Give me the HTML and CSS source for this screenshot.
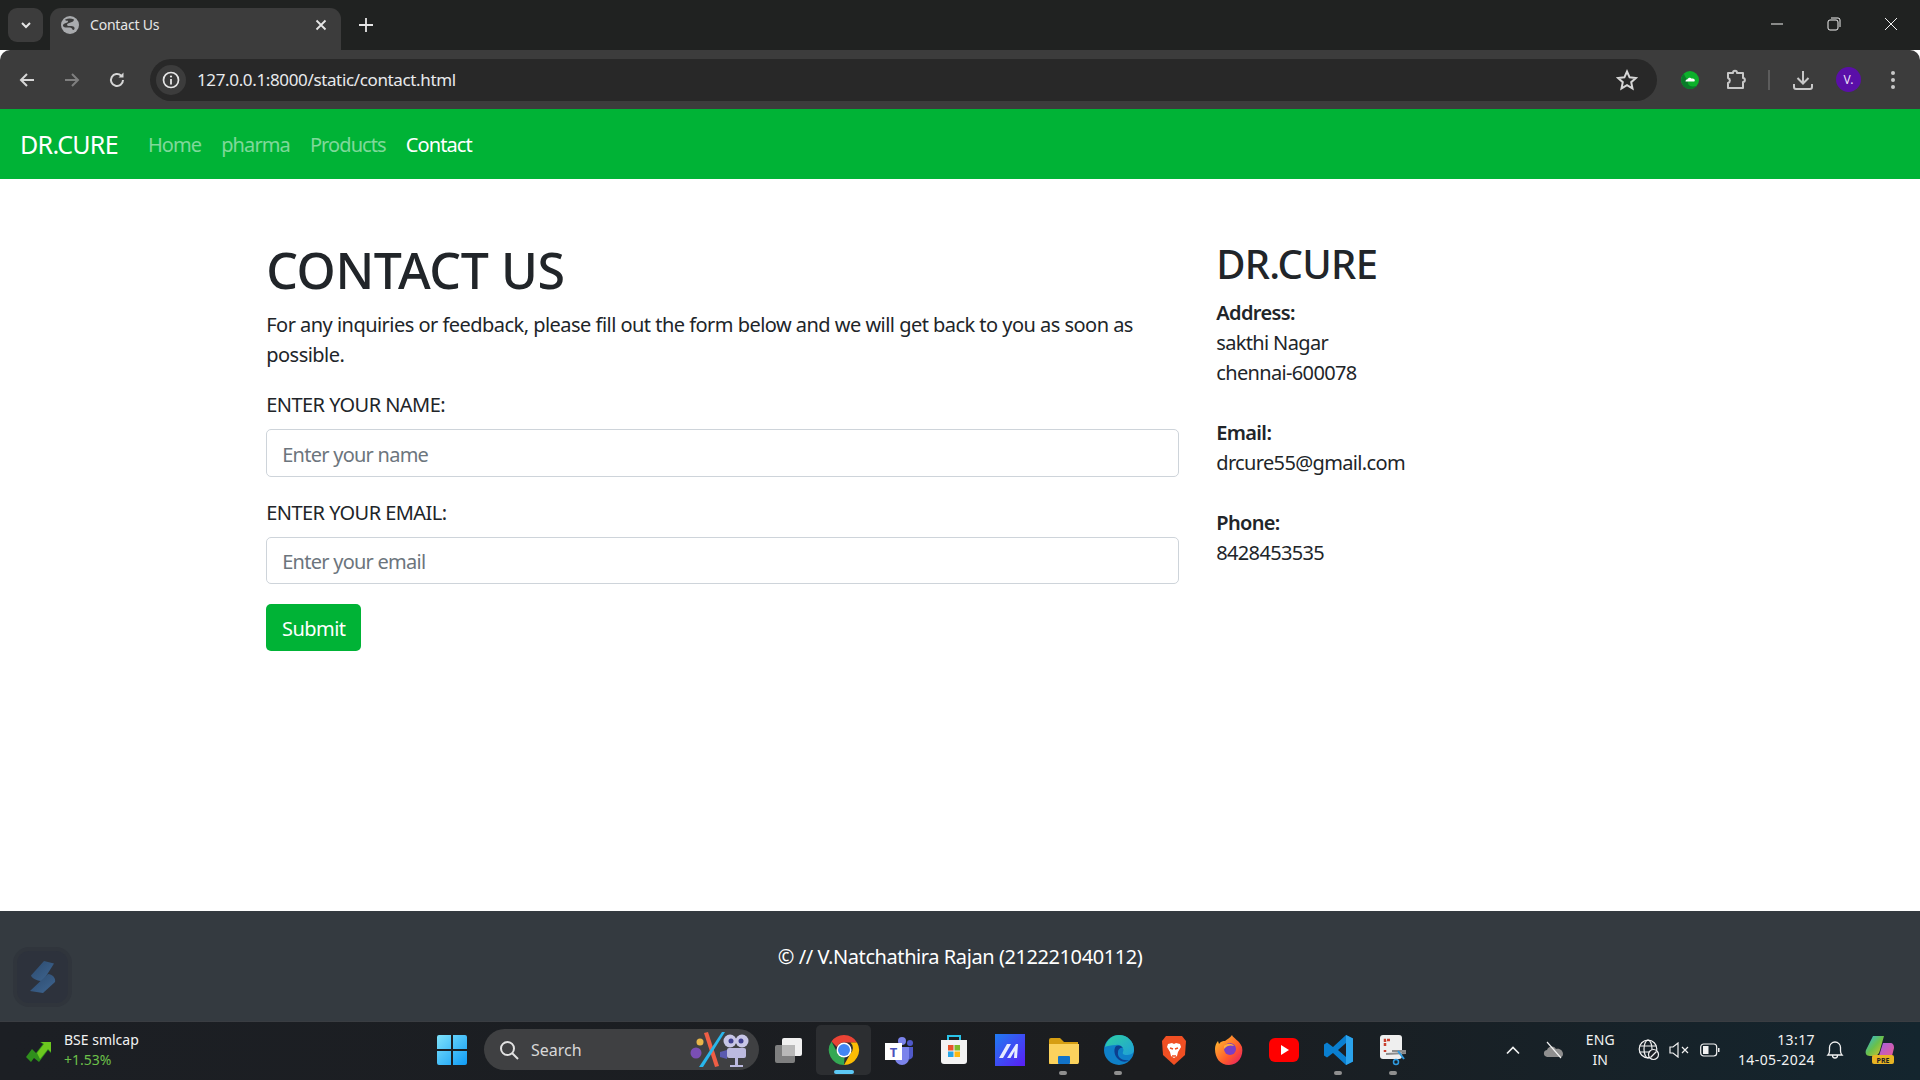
FILE: index.html
```html
<!DOCTYPE html>
<html lang="en">
<head>
    <meta charset="UTF-8">
    <meta name="viewport" content="width=device-width, initial-scale=1.0">
    <title>Contact Us</title>
    <link rel="stylesheet" href="styles.css">
</head>
<body>
    <!-- Browser tab strip -->
    <div class="tabstrip">
        <div class="tab-search">
            <svg width="14" height="14" viewBox="0 0 14 14"><path d="M3 5l4 4 4-4" fill="none" stroke="#e6e6e6" stroke-width="2"/></svg>
        </div>
        <div class="tab">
            <svg class="tab-globe" width="18" height="18" viewBox="0 0 18 18">
                <circle cx="9" cy="9" r="9" fill="#a9abae"/>
                <path d="M4.500 3.500c3-1.500 6-1 8.500 0 0 1.500-1.500 2.500-3.500 3-2 .5-3.500 1-3.500 2.500 0 1 2 1 4 1 2.500 0 4 1 3.500 3-.5 1-1.500 1.500-2 .5-.5-1.500-2-2-3.500-2-2.500 0-5 .5-6-1.500-.5-1.500 1-2.500 3-3 2-.5 2.500-1.500 1.500-2.500-1 .5-2 .5-2.500-1.500z" fill="#3c3c3c"/>
            </svg>
            <span class="tab-title">Contact Us</span>
            <svg class="tab-close" width="12" height="12" viewBox="0 0 12 12"><path d="M1.500 1.500l9 9M10.500 1.500l-9 9" stroke="#e6e6e6" stroke-width="1.800"/></svg>
        </div>
        <svg class="tab-new" width="16" height="16" viewBox="0 0 16 16"><path d="M8 1v14M1 8h14" stroke="#e6e6e6" stroke-width="1.800"/></svg>
        <div class="win-controls">
            <svg width="14" height="14" viewBox="0 0 14 14"><path d="M1 7h12" stroke="#f2f2f2" stroke-width="1"/></svg>
            <svg width="14" height="14" viewBox="0 0 14 14"><rect x="1" y="3" width="10" height="10" rx="2" fill="none" stroke="#f2f2f2"/><path d="M4 1h7a2 2 0 0 1 2 2v7" fill="none" stroke="#f2f2f2"/></svg>
            <svg width="14" height="14" viewBox="0 0 14 14"><path d="M1 1l12 12M13 1L1 13" stroke="#f2f2f2" stroke-width="1"/></svg>
        </div>
    </div>

    <!-- Browser toolbar -->
    <div class="toolbar">
        <div class="nav-arrows">
            <svg width="18" height="18" viewBox="0 0 18 18"><path d="M16 9H3M9 3L3 9l6 6" fill="none" stroke="#d6d6d6" stroke-width="2"/></svg>
            <svg width="18" height="18" viewBox="0 0 18 18"><path d="M2 9h13M9 3l6 6-6 6" fill="none" stroke="#7f7f7f" stroke-width="2"/></svg>
            <svg width="18" height="18" viewBox="0 0 18 18"><path d="M15 9a6 6 0 1 1-1.800-4.300" fill="none" stroke="#d6d6d6" stroke-width="2"/><path d="M15.500 1.500v5h-5z" fill="#d6d6d6"/></svg>
        </div>
        <div class="omnibox">
            <div class="site-info">
                <svg width="18" height="18" viewBox="0 0 18 18"><circle cx="9" cy="9" r="7.500" fill="none" stroke="#e6e6e6" stroke-width="1.700"/><path d="M9 8v5.500" stroke="#e6e6e6" stroke-width="1.800"/><circle cx="9" cy="5.500" r="1.100" fill="#e6e6e6"/></svg>
            </div>
            <span class="url">127.0.0.1:8000/static/contact.html</span>
            <svg class="star" width="22" height="22" viewBox="0 0 22 22"><path d="M11 2.500l2.600 5.800 6.300.7-4.700 4.200 1.300 6.200-5.500-3.200-5.500 3.200 1.300-6.200L2.100 9l6.300-.7z" fill="none" stroke="#d6d6d6" stroke-width="2"/></svg>
        </div>
        <div class="toolbar-icons">
            <svg class="ext-green" width="20" height="20" viewBox="0 0 20 20"><circle cx="10" cy="10" r="9" fill="#0db02b"/><path d="M4 3.500A9 9 0 0 0 10 19c3 0 5-1 6.500-3-4 1-7 .5-8-1.500s-1-3-.5-4-3-2-4-7z" fill="#0a7a2a"/><path d="M5.500 11.500c0-1.500 1-2.200 2-2.200.5-1.800 3.300-2.300 4.300-.6 1.800-.4 3 .6 3 2 0 .5-.3.8-.8.8H6.300c-.5 0-.8 0-.8 0z" fill="#fff"/></svg>
            <svg class="ext-puzzle" width="22" height="22" viewBox="0 0 22 22"><path d="M3 4h5c0-3 4-3 4 0h6v5c2.500 0 2.500 4 0 4v6H3v-5c2.500-1 2.500-4 0-5z" fill="none" stroke="#c8c8c8" stroke-width="2" stroke-linejoin="round"/></svg>
            <span class="toolbar-sep"></span>
            <svg class="download" width="22" height="22" viewBox="0 0 22 22"><path d="M11 2v12M5.500 9l5.500 5.500L16.500 9M2 15v3a2 2 0 0 0 2 2h14a2 2 0 0 0 2-2v-3" fill="none" stroke="#c8c8c8" stroke-width="2"/></svg>
            <span class="avatar">V.</span>
            <svg class="dots" width="6" height="20" viewBox="0 0 6 20"><circle cx="3" cy="3" r="2" fill="#c8c8c8"/><circle cx="3" cy="10" r="2" fill="#c8c8c8"/><circle cx="3" cy="17" r="2" fill="#c8c8c8"/></svg>
        </div>
    </div>

    <!-- Page navbar -->
    <nav class="navbar">
        <a class="brand" href="#">DR.CURE</a>
        <a class="nav-link" href="#">Home</a>
        <a class="nav-link" href="#">pharma</a>
        <a class="nav-link" href="#">Products</a>
        <a class="nav-link active" href="#">Contact</a>
    </nav>

    <main class="container">
        <section class="col-form">
            <h1>CONTACT US</h1>
            <p class="intro">For any inquiries or feedback, please fill out the form below and we will get back to you as soon as possible.</p>
            <form>
                <div class="form-group">
                    <label for="name">ENTER YOUR NAME:</label>
                    <input type="text" id="name" placeholder="Enter your name">
                </div>
                <div class="form-group">
                    <label for="email">ENTER YOUR EMAIL:</label>
                    <input type="email" id="email" placeholder="Enter your email">
                </div>
                <button type="button" class="btn-submit">Submit</button>
            </form>
        </section>
        <aside class="col-info">
            <h2>DR.CURE</h2>
            <p class="info-block"><strong>Address:</strong><br>sakthi Nagar<br>chennai-600078</p>
            <p class="info-block"><strong>Email:</strong><br>drcure55@gmail.com</p>
            <p class="info-block"><strong>Phone:</strong><br>8428453535</p>
        </aside>
    </main>

    <footer class="footer">
        <p>&copy; // V.Natchathira Rajan (212221040112)</p>
        <div class="float-badge">
            <svg width="26" height="32" viewBox="0 0 26 32">
                <defs><linearGradient id="badge" x1="0" y1="0" x2="1" y2="1"><stop offset="0" stop-color="#2c4a6e"/><stop offset="1" stop-color="#3f6691"/></linearGradient></defs>
                <path d="M14 0l10 2.500L13 20C8 20 2 18 1 14.500z" fill="url(#badge)"/>
                <path d="M18 13c4 0 8 4 7 8L13 32 0 30z" fill="url(#badge)"/>
            </svg>
        </div>
    </footer>

    <!-- Windows taskbar -->
    <div class="taskbar">
        <div class="widget">
            <svg width="30" height="24" viewBox="0 0 30 24"><path d="M1 19l6-8 4 4 7-9-3-2h11v11l-3-3-9 12-5-4-3 4z" fill="#2f8f1c"/><path d="M12 15l7-9-3-2h10v10l-3-3-8 10z" fill="#6cc71f"/></svg>
            <div class="widget-text">
                <span>BSE smlcap</span>
                <span class="widget-up">+1.53%</span>
            </div>
        </div>

        <div class="task-center">
            <svg class="start" width="32" height="32" viewBox="0 0 32 32">
                <defs><linearGradient id="win" x1="0" y1="0" x2="1" y2="1"><stop offset="0" stop-color="#7fe3fb"/><stop offset="1" stop-color="#0f9bf5"/></linearGradient></defs>
                <path d="M1 3a2 2 0 0 1 2-2h12v14H1zM17 1h12a2 2 0 0 1 2 2v12H17zM1 17h14v14H3a2 2 0 0 1-2-2zM17 17h14v12a2 2 0 0 1-2 2H17z" fill="url(#win)"/>
            </svg>
            <div class="search-pill">
                <svg width="20" height="20" viewBox="0 0 20 20"><circle cx="8.500" cy="8.500" r="6.500" fill="none" stroke="#e2e2e2" stroke-width="2"/><path d="M13 13l6 6" stroke="#e2e2e2" stroke-width="2"/></svg>
                <span>Search</span>
                <svg class="search-art" width="64" height="38" viewBox="0 0 64 38">
                    <circle cx="13" cy="11" r="3.500" fill="#e9b64a"/>
                    <circle cx="9" cy="22" r="5.500" fill="#7a4fb5"/>
                    <path d="M17 2l4-1 11 34-4 1z" fill="#ef5e45"/>
                    <path d="M35 1h3L16 36h-4z" fill="#29b6ec"/>
                    <circle cx="43" cy="10" r="6.500" fill="#c8c6e6"/><circle cx="55" cy="10" r="6.500" fill="#c8c6e6"/>
                    <circle cx="44" cy="10" r="2.500" fill="#3f3f8f"/><circle cx="54" cy="10" r="2.500" fill="#3f3f8f"/>
                    <rect x="40" y="17" width="19" height="10" rx="2" fill="#bcbadf"/>
                    <path d="M40 19l-7 2v5l7 2z" fill="#5a5ab0"/>
                    <path d="M48 27h3v9h-3zM43 34h13v2H43z" fill="#bcbadf"/>
                </svg>
            </div>
            <div class="task-item">
                <svg width="32" height="32" viewBox="0 0 32 32"><rect x="9" y="4" width="20" height="18" rx="2" fill="#f0f0f0"/><rect x="2" y="11" width="20" height="18" rx="2" fill="#8a8a8a" opacity=".9"/><rect x="9" y="11" width="13" height="11" fill="#b8b8b8"/></svg>
            </div>
            <div class="task-item is-active">
                <svg width="32" height="32" viewBox="0 0 32 32">
                    <path d="M16 1a15 15 0 0 1 13 7.500H16a7.500 7.500 0 0 0-7 4.500L3.500 7.500A15 15 0 0 1 16 1z" fill="#ea4335"/>
                    <path d="M29 8.500A15 15 0 0 1 16 31l6.500-11.500a7.500 7.500 0 0 0 0-11z" fill="#fbbc04"/>
                    <path d="M3.500 7.500L9.800 19.500a7.500 7.500 0 0 0 6.700 4L16 31A15 15 0 0 1 3.500 7.500z" fill="#34a853"/>
                    <circle cx="16" cy="16" r="7.500" fill="#fff"/><circle cx="16" cy="16" r="6" fill="#4285f4"/>
                </svg>
                <span class="task-dot-active"></span>
            </div>
            <div class="task-item">
                <svg width="32" height="32" viewBox="0 0 32 32"><circle cx="19" cy="7" r="4" fill="#7b83eb"/><circle cx="27" cy="9" r="3" fill="#5059c9"/><path d="M23 13h7v9a4 4 0 0 1-7 2z" fill="#5059c9"/><path d="M12 13h14v11a7 7 0 0 1-14 0z" fill="#7b83eb"/><rect x="2" y="9" width="17" height="17" fill="#fff"/><text x="10.500" y="23" class="teams-t">T</text></svg>
            </div>
            <div class="task-item">
                <svg width="32" height="32" viewBox="0 0 32 32"><path d="M10 6V2h12v4" fill="none" stroke="#2ac3e8" stroke-width="2"/><path d="M3 6h26v21a3 3 0 0 1-3 3H6a3 3 0 0 1-3-3z" fill="#f3f3f3"/><rect x="10" y="11" width="5.500" height="5.500" fill="#e8532b"/><rect x="16.500" y="11" width="5.500" height="5.500" fill="#7dba29"/><rect x="10" y="17.500" width="5.500" height="5.500" fill="#27a6e8"/><rect x="16.500" y="17.500" width="5.500" height="5.500" fill="#fdb913"/></svg>
            </div>
            <div class="task-item">
                <svg width="32" height="32" viewBox="0 0 32 32"><defs><linearGradient id="mm" x1="0" y1="0" x2="1" y2="1"><stop offset="0" stop-color="#1f7cf2"/><stop offset="1" stop-color="#5a1df5"/></linearGradient></defs><rect x="2" y="0" width="30" height="32" fill="url(#mm)"/><path d="M6 24l8-14h4l-8 14zM14 24l9-14h2l-1 14h-3l.500-7-4 7z" fill="#e6ecff"/></svg>
            </div>
            <div class="task-item has-dot">
                <svg width="32" height="32" viewBox="0 0 32 32"><path d="M1 6a2 2 0 0 1 2-2h9l4 4h14v22H1z" fill="#d69e12"/><path d="M1 10h30v18a2 2 0 0 1-2 2H3a2 2 0 0 1-2-2z" fill="#fbd25d"/><rect x="10" y="22" width="12" height="8" rx="1" fill="#1273c9"/></svg>
            </div>
            <div class="task-item has-dot">
                <svg width="32" height="32" viewBox="0 0 32 32"><defs><linearGradient id="edge" x1="0" y1="0" x2="1" y2="1"><stop offset="0" stop-color="#2fd0a0"/><stop offset="1" stop-color="#1f9fd8"/></linearGradient></defs><circle cx="16" cy="16" r="15" fill="#0f80c8"/><path d="M2 13C4 5 10 1 16 1c8 0 15 6 15 15 0 4-4 5-8 5-2 0-4-1-3-3 2-3-2-8-7-7-5 0-9 1-11 2z" fill="url(#edge)"/><path d="M13 12c-3 3-2 12 5 15 3 1 6 1 8-1-6 1-12-2-11-8 0-3 3-5 5-4-2-3-5-3-7-2z" fill="#0c3f8f"/></svg>
            </div>
            <div class="task-item">
                <svg width="32" height="32" viewBox="0 0 32 32"><path d="M8 2h16l4 5-1 14-11 10L5 21 4 7z" fill="#f04f23"/><path d="M10 10l4-1 2 1 2-1 4 1 1 3-3 5-1 4-3 2-3-2-1-4-3-5z" fill="#fff"/><path d="M12 14l3 1M20 14l-3 1M14 22h4" stroke="#f04f23" stroke-width="1.500"/></svg>
            </div>
            <div class="task-item">
                <svg width="32" height="32" viewBox="0 0 32 32"><defs><linearGradient id="fx" x1="0" y1="0" x2="1" y2="1"><stop offset="0" stop-color="#ffc92e"/><stop offset=".6" stop-color="#ff5a2c"/><stop offset="1" stop-color="#e3156c"/></linearGradient></defs><path d="M19 1c1 3 8 6 10 12 2 9-4 18-13 18S2 24 2 15c0-3 1-6 3-8l1 3c2-3 4-3 6-3 2-2 5-3 7-6z" fill="url(#fx)"/><circle cx="17" cy="15" r="6" fill="#7a3ec6"/><path d="M11 12c3-3 8-3 10 0-3-1-7-1-10 3z" fill="#ffb03a"/></svg>
            </div>
            <div class="task-item">
                <svg width="32" height="32" viewBox="0 0 32 32"><rect x="1" y="4" width="30" height="24" rx="6" fill="#f00"/><path d="M13 11l8 5-8 5z" fill="#fff"/></svg>
            </div>
            <div class="task-item has-dot">
                <svg width="32" height="32" viewBox="0 0 32 32"><path d="M23 1l7 3.500v23L23 31 10 19l-6 4.500-3-2V10.500l3-2 6 4.500z" fill="#0a7fd0"/><path d="M23 9l-8 7 8 7z" fill="#1c1f24"/><path d="M23 1l7 3.500v23L23 31z" fill="#2ba3ec"/></svg>
            </div>
            <div class="task-item has-dot">
                <svg width="32" height="32" viewBox="0 0 32 32"><rect x="2" y="1" width="22" height="24" rx="3" fill="#efefef"/><path d="M7 12V6h6M7 16v2" fill="none" stroke="#c9402f" stroke-width="2.500" stroke-dasharray="3 1"/><path d="M8 20l20-1M14 17l14 0" stroke="#8d8d8d" stroke-width="2"/><path d="M20 17l6 8" stroke="#2f9be0" stroke-width="2"/><circle cx="18" cy="28" r="2.500" fill="none" stroke="#2f9be0" stroke-width="1.500"/></svg>
            </div>
        </div>

        <div class="tray">
            <svg class="tray-chevron" width="14" height="9" viewBox="0 0 14 9"><path d="M1 7.500l6-6 6 6" fill="none" stroke="#f2f2f2" stroke-width="1.700"/></svg>
            <svg class="tray-cloud" width="22" height="18" viewBox="0 0 22 18"><path d="M2 15c-2-2-1-6 2-6 1-4 7-5 9-1 4-1 7 2 7 5 0 2-1 3-2 3H4z" fill="#8f8f8f"/><path d="M4 1l14 16" stroke="#f2f2f2" stroke-width="1.200"/></svg>
            <div class="tray-lang"><span>ENG</span><span>IN</span></div>
            <svg class="tray-globe" width="22" height="22" viewBox="0 0 22 22"><circle cx="10" cy="10" r="8.800" fill="none" stroke="#f2f2f2" stroke-width="1.200"/><ellipse cx="10" cy="10" rx="4" ry="8.800" fill="none" stroke="#f2f2f2" stroke-width="1.200"/><path d="M1.500 7h17M1.500 13h17" stroke="#f2f2f2" stroke-width="1.200"/><circle cx="15.500" cy="15.500" r="5" fill="#1c1f24" stroke="#f2f2f2" stroke-width="1.200"/><path d="M12.500 18.500l6-6" stroke="#f2f2f2" stroke-width="1.200"/></svg>
            <svg class="tray-mute" width="20" height="16" viewBox="0 0 20 16"><path d="M1 5h3l5-4v14l-5-4H1z" fill="none" stroke="#f2f2f2" stroke-width="1.200"/><path d="M13 5l6 6M19 5l-6 6" stroke="#f2f2f2" stroke-width="1.200"/></svg>
            <svg class="tray-battery" width="20" height="14" viewBox="0 0 20 14"><rect x=".7" y="1" width="16" height="12" rx="3" fill="none" stroke="#f2f2f2" stroke-width="1.200"/><rect x="3" y="3" width="5.500" height="8" fill="#f2f2f2"/><rect x="18" y="5" width="1.500" height="4" fill="#f2f2f2"/></svg>
            <div class="tray-clock"><span>13:17</span><span>14-05-2024</span></div>
            <svg class="tray-bell" width="18" height="20" viewBox="0 0 18 20"><path d="M2 15c1-1 1.500-2 1.500-4V7.500a5.500 5.500 0 0 1 11 0V11c0 2 .5 3 1.500 4zM6.500 15.500a2.500 2.500 0 0 0 5 0" fill="none" stroke="#f2f2f2" stroke-width="1.300"/></svg>
            <svg class="tray-copilot" width="30" height="30" viewBox="0 0 30 30">
                <defs><linearGradient id="cp" x1="0" y1="0" x2="1" y2="1"><stop offset="0" stop-color="#2bb6e8"/><stop offset=".5" stop-color="#6ac04a"/><stop offset="1" stop-color="#e5c22a"/></linearGradient><linearGradient id="cq" x1="0" y1="0" x2="1" y2="1"><stop offset="0" stop-color="#a060e6"/><stop offset="1" stop-color="#f05a8c"/></linearGradient></defs>
                <path d="M8 1h11l-4 14c-1 4-3 6-6 6H5C1 21 0 18 1 15z" fill="url(#cp)"/>
                <path d="M18 8h7c3 0 4 2 4 5l-2 8c-1 2-3 3-5 3h-9z" fill="url(#cq)"/>
                <rect x="7" y="20" width="22" height="9" rx="2" fill="#e8b423"/>
                <text x="18" y="27.500" class="copilot-pre">PRE</text>
            </svg>
        </div>
    </div>
</body>
</html>
```

FILE: styles.css
```css
/* Base */
* {
    box-sizing: border-box;
}

html, body {
    height: 100%;
}

body {
    margin: 0;
    display: flex;
    flex-direction: column;
    font-family: 'Noto Sans', 'Open Sans', sans-serif;
    font-size: 20px;
    line-height: 30px;
    color: #212529;
    background-color: #fff;
    overflow: hidden;
}

/* Tab strip */
.tabstrip {
    height: 50px;
    flex-shrink: 0;
    display: flex;
    align-items: flex-end;
    background-color: #202221;
    color: #e6e6e6;
    font-size: 14px;
}

.tab-search {
    width: 35px;
    height: 34px;
    margin: 0 7px 8px 8px;
    border-radius: 9px;
    background-color: #3c3c3c;
    display: flex;
    align-items: center;
    justify-content: center;
}

.tab {
    width: 291px;
    height: 42px;
    display: flex;
    align-items: center;
    padding: 0 14px 8px 11px;
    border-radius: 11px 11px 0 0;
    background-color: #3c3c3c;
}

.tab-title {
    margin-left: 11px;
    flex: 1;
    letter-spacing: -0.2px;
}

.tab-new {
    margin: 0 0 17px 17px;
}

.win-controls {
    margin-left: auto;
    margin-right: 22px;
    margin-bottom: 19px;
    display: flex;
    gap: 43px;
}

/* Toolbar */
.toolbar {
    height: 59px;
    flex-shrink: 0;
    display: flex;
    align-items: center;
    background-color: #3c3c3c;
    border-radius: 10px 10px 0 0;
}

.nav-arrows {
    width: 150px;
    padding-left: 18px;
    display: flex;
    gap: 27px;
}

.omnibox {
    width: 1507px;
    height: 42px;
    display: flex;
    align-items: center;
    border-radius: 21px;
    background-color: #282828;
    padding: 0 19px 0 6px;
}

.site-info {
    width: 30px;
    height: 30px;
    border-radius: 50%;
    background-color: #3c3c3c;
    display: flex;
    align-items: center;
    justify-content: center;
}

.url {
    margin-left: 11px;
    flex: 1;
    font-size: 17px;
    letter-spacing: -0.36px;
    color: #e8eaed;
}

.toolbar-icons {
    flex: 1;
    display: flex;
    align-items: center;
    padding-left: 23px;
}

.ext-puzzle {
    margin-left: 25px;
}

.toolbar-sep {
    width: 2px;
    height: 20px;
    margin: 0 22px 0 21px;
    background-color: #5c5c5c;
}

.avatar {
    width: 25px;
    height: 25px;
    margin-left: 22px;
    border-radius: 50%;
    background-color: #5a0fa8;
    color: #e8dff5;
    font-size: 12px;
    line-height: 25px;
    text-align: center;
}

.dots {
    margin-left: 29px;
}

/* Navbar */
.navbar {
    height: 70px;
    flex-shrink: 0;
    display: flex;
    align-items: center;
    padding: 0 20px;
    background-color: #00b336;
}

.navbar a {
    text-decoration: none;
}

.brand {
    margin-right: 20px;
    font-size: 25px;
    letter-spacing: -0.7px;
    color: #fff;
}

.nav-link {
    padding: 1px 10px 0;
    color: rgba(255, 255, 255, 0.5);
    letter-spacing: -0.9px;
}

.nav-link.active {
    color: #fff;
}

/* Main content */
.container {
    flex: 1;
    width: 1425px;
    margin: 0 auto;
    padding-top: 60px;
    display: flex;
}

.col-form {
    width: 950px;
    padding: 0 18.75px;
}

.col-info {
    width: 475px;
    padding: 0 18.75px;
}

h1, h2 {
    margin: 0 0 10px;
    font-weight: 500;
    line-height: 1.2;
}

h1 {
    padding-top: 1px;
    margin-bottom: 9px;
    font-size: 50px;
    letter-spacing: -0.4px;
}

h2 {
    padding-top: 1px;
    margin-bottom: 10px;
    font-size: 40px;
    letter-spacing: -0.7px;
}

.intro {
    padding-top: 1px;
    margin: 0 0 19px;
    letter-spacing: -0.53px;
}

.form-group {
    margin-bottom: 20px;
}

label {
    display: block;
    padding-top: 1px;
    margin-bottom: 9px;
    letter-spacing: -0.55px;
}

input {
    display: block;
    width: 100%;
    height: 47.5px;
    padding: 9px 15px 6px;
    border: 1.25px solid #ced4da;
    border-radius: 5px;
    font: inherit;
    letter-spacing: -0.75px;
    color: #495057;
}

input::placeholder {
    color: #6c757d;
    opacity: 1;
}

.btn-submit {
    width: 95px;
    height: 47px;
    padding: 2px 0 0;
    border: none;
    border-radius: 5px;
    background-color: #00b336;
    color: #fff;
    font: inherit;
    letter-spacing: -0.55px;
}

.info-block {
    margin: 0 0 30px;
    letter-spacing: -0.65px;
}

strong {
    font-weight: 600;
}

/* Footer */
.footer {
    position: relative;
    flex-shrink: 0;
    padding: 31px 0 0;
    height: 110px;
    background-color: #343a40;
    color: #fff;
    text-align: center;
    letter-spacing: -0.42px;
}

.footer p {
    margin: 0;
}

.float-badge {
    position: absolute;
    left: 17px;
    top: 40px;
    width: 51px;
    height: 52px;
    border-radius: 12px;
    background-color: #2d323c;
    box-shadow: 0 0 0 4px #30353c;
    display: flex;
    align-items: center;
    justify-content: center;
}

/* Taskbar */
.taskbar {
    position: relative;
    height: 59px;
    flex-shrink: 0;
    display: flex;
    align-items: center;
    padding-bottom: 3px;
    background: linear-gradient(90deg, #1c1f24 0%, #1b1d20 60%, #14252e 100%);
    border-top: 1px solid #3a3d42;
    color: #f2f2f2;
    font-size: 14px;
    line-height: 20px;
}

.widget {
    width: 434px;
    padding-left: 25px;
    display: flex;
    align-items: center;
    gap: 9px;
}

.widget-text {
    display: flex;
    flex-direction: column;
}

.widget-up {
    color: #6cc04a;
}

.task-center {
    display: flex;
    align-items: center;
}

.start {
    margin: 0 16px 0 2px;
}

.search-pill {
    width: 275px;
    height: 41px;
    margin-right: 2px;
    padding: 0 8px 0 15px;
    display: flex;
    align-items: center;
    gap: 12px;
    border-radius: 21px;
    background-color: #3f4042;
    font-size: 16px;
    color: #d8d8d8;
}

.search-art {
    margin-left: auto;
}

.task-item {
    position: relative;
    width: 55px;
    height: 50px;
    display: flex;
    align-items: center;
    justify-content: center;
}

.task-item.is-active {
    background-color: #2c2e31;
    border-radius: 5px;
}

.task-dot-active {
    position: absolute;
    left: 18px;
    bottom: 1px;
    width: 20px;
    height: 4px;
    border-radius: 2px;
    background-color: #5cc8f5;
}

.has-dot::after {
    content: '';
    position: absolute;
    left: 23px;
    bottom: 0;
    width: 8px;
    height: 4px;
    border-radius: 2px;
    background-color: #8f8f8f;
}

.teams-t {
    font-family: 'Noto Sans', sans-serif;
    font-size: 13px;
    font-weight: 700;
    fill: #4b53bc;
    text-anchor: middle;
}

.copilot-pre {
    font-family: 'Noto Sans', sans-serif;
    font-size: 7px;
    font-weight: 700;
    fill: #1c1f24;
    text-anchor: middle;
}

.tray {
    position: absolute;
    right: 0;
    top: 0;
    bottom: 2px;
    display: flex;
    align-items: center;
    padding-right: 25px;
}

.tray-cloud {
    margin-left: 23px;
}

.tray-lang {
    margin: 0 23px 0 21px;
    display: flex;
    flex-direction: column;
    align-items: center;
    letter-spacing: 0.2px;
}

.tray-mute {
    margin-left: 9px;
}

.tray-battery {
    margin-left: 11px;
}

.tray-clock {
    margin-left: 18px;
    display: flex;
    flex-direction: column;
    align-items: flex-end;
    letter-spacing: 0.4px;
}

.tray-bell {
    margin-left: 11px;
}

.tray-copilot {
    margin-left: 21px;
}
```
